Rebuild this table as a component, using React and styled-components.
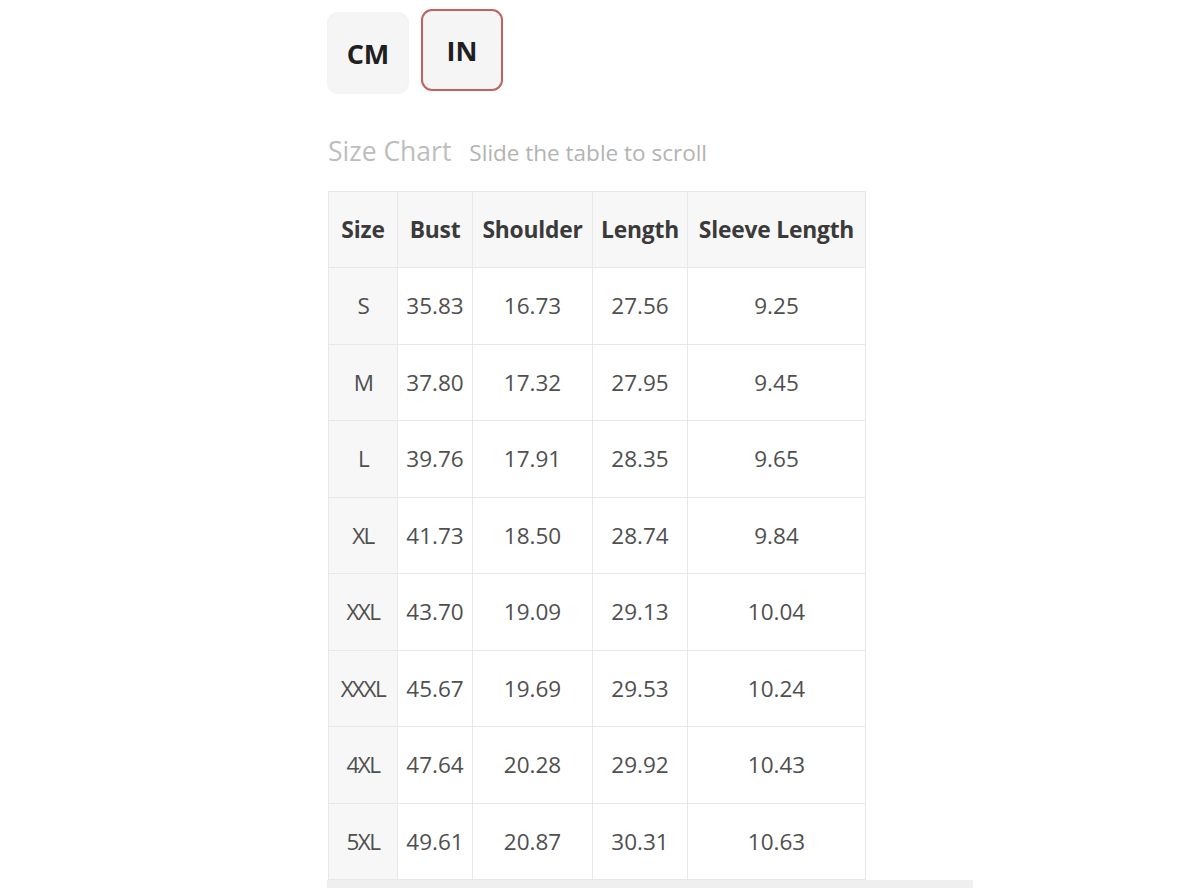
import React from 'react'
import styled, { createGlobalStyle } from 'styled-components'

const GlobalStyle = createGlobalStyle`
  html, body {
    margin: 0;
    padding: 0;
    background: #ffffff;
    font-family: "Open Sans", "Liberation Sans", sans-serif;
  }
`

const columns = [
  { key: 'size', label: 'Size', width: 69 },
  { key: 'bust', label: 'Bust', width: 75 },
  { key: 'shoulder', label: 'Shoulder', width: 120 },
  { key: 'length', label: 'Length', width: 95 },
  { key: 'sleeve', label: 'Sleeve Length', width: 178 },
]

const rows = [
  ['S', '35.83', '16.73', '27.56', '9.25'],
  ['M', '37.80', '17.32', '27.95', '9.45'],
  ['L', '39.76', '17.91', '28.35', '9.65'],
  ['XL', '41.73', '18.50', '28.74', '9.84'],
  ['XXL', '43.70', '19.09', '29.13', '10.04'],
  ['XXXL', '45.67', '19.69', '29.53', '10.24'],
  ['4XL', '47.64', '20.28', '29.92', '10.43'],
  ['5XL', '49.61', '20.87', '30.31', '10.63'],
]

const Page = styled.div`
  width: 1182px;
  height: 888px;
  overflow: hidden;
  padding-left: 327px;
  box-sizing: border-box;
`

const UnitRow = styled.div`
  display: flex;
  align-items: flex-start;
  gap: 12px;
  padding-top: 9px;
  height: 84px;
`

const UnitButton = styled.button`
  width: 82px;
  height: ${p => (p.$active ? '82px' : '82px')};
  margin-top: ${p => (p.$active ? '0' : '3px')};
  box-sizing: border-box;
  border-radius: 11px;
  border: 2px solid ${p => (p.$active ? '#c2615d' : '#f4f4f4')};
  background: #f5f5f5;
  font-family: "Open Sans", "Liberation Sans", sans-serif;
  font-weight: 700;
  font-size: 27px;
  color: #1f1f1f;
  padding: 0;
`

const TitleRow = styled.div`
  display: flex;
  align-items: baseline;
  gap: 18px;
  margin-top: 40px;
  height: 36px;
  padding-left: 1px;
`

const Title = styled.span`
  font-size: 26.5px;
  color: #bdbdbd;
`

const Hint = styled.span`
  font-size: 22.5px;
  color: #b3b3b3;
`

const ScrollArea = styled.div`
  margin-top: 22px;
  width: 646px;
`

const Table = styled.table`
  border-collapse: collapse;
  table-layout: fixed;
  margin-left: 1px;
`

const HeadCell = styled.th`
  width: ${p => p.$w}px;
  height: 76px;
  padding: 0;
  box-sizing: border-box;
  background: #f7f7f7;
  border: 1px solid #e8e8e8;
  font-size: 22.8px;
  font-weight: 700;
  color: #3a3a3a;
  text-align: center;
  white-space: nowrap;
  letter-spacing: -0.2px;
`

const Cell = styled.td`
  height: 76.5px;
  padding: 0;
  box-sizing: border-box;
  background: ${p => (p.$first ? '#f7f7f7' : '#ffffff')};
  border: 1px solid #e8e8e8;
  font-size: 22.5px;
  color: #4f4f4f;
  text-align: center;
  white-space: nowrap;
  letter-spacing: ${p => (p.$first ? '-1.5px' : '0')};
`

const ScrollTrack = styled.div`
  height: 10px;
  background: #efefef;
`

export default function App() {
  return (
    <Page>
      <GlobalStyle />
      <UnitRow>
        <UnitButton>CM</UnitButton>
        <UnitButton $active>IN</UnitButton>
      </UnitRow>
      <TitleRow>
        <Title>Size Chart</Title>
        <Hint>Slide the table to scroll</Hint>
      </TitleRow>
      <ScrollArea>
        <Table>
          <thead>
            <tr>
              {columns.map(c => (
                <HeadCell key={c.key} $w={c.width}>{c.label}</HeadCell>
              ))}
            </tr>
          </thead>
          <tbody>
            {rows.map(r => (
              <tr key={r[0]}>
                {r.map((v, i) => (
                  <Cell key={i} $first={i === 0}>{v}</Cell>
                ))}
              </tr>
            ))}
          </tbody>
        </Table>
        <ScrollTrack />
      </ScrollArea>
    </Page>
  )
}
